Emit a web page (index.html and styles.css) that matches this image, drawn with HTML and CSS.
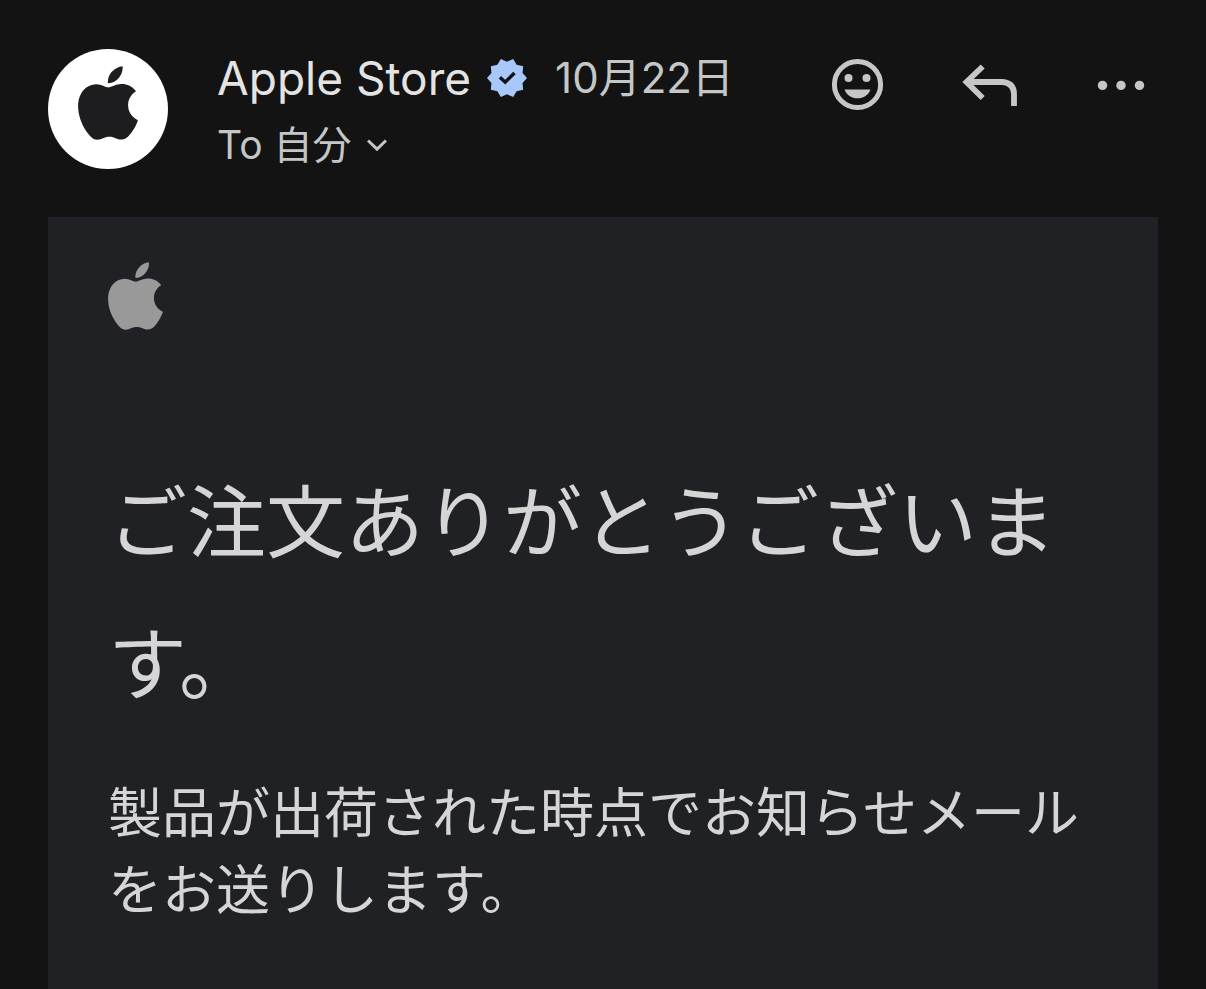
FILE: index.html
```html
<!DOCTYPE html>
<html lang="ja">
<head>
<meta charset="utf-8">
<meta name="viewport" content="width=device-width, initial-scale=1">
<title>Apple Store</title>
<link rel="stylesheet" href="styles.css">
</head>
<body>
<svg class="defs" aria-hidden="true">
  <symbol id="apple" viewBox="2.2 0 19.6 24">
    <path d="M12.152 6.896c-.948 0-2.415-1.078-3.96-1.04-2.04.027-3.91 1.183-4.961 3.014-2.117 3.675-.546 9.103 1.519 12.09 1.013 1.454 2.208 3.09 3.792 3.039 1.52-.065 2.09-.987 3.935-.987 1.831 0 2.35.987 3.96.948 1.637-.026 2.676-1.48 3.676-2.948 1.156-1.688 1.636-3.325 1.662-3.415-.039-.013-3.182-1.221-3.22-4.857-.026-3.04 2.48-4.494 2.597-4.559-1.429-2.09-3.623-2.324-4.39-2.376-2-.156-3.675 1.09-4.61 1.09zM15.53 3.83c.843-1.012 1.4-2.427 1.245-3.83-1.207.052-2.662.805-3.532 1.818-.78.896-1.454 2.338-1.273 3.714 1.338.104 2.715-.688 3.559-1.701"/>
  </symbol>
</svg>
<main class="message">
  <header class="header">
    <div class="avatar"><svg class="avatar-logo"><use href="#apple"/></svg></div>
    <div class="meta">
      <div class="sender-row">
        <span class="sender">Apple Store</span>
        <svg class="badge" viewBox="1 1 22 22" role="img" aria-label="認証済み">
          <path d="M23 12l-2.440-2.780.340-3.680-3.610-.820-1.890-3.180L12 3 8.600 1.540 6.710 4.720l-3.610.810.340 3.680L1 12l2.440 2.780-.340 3.690 3.610.820 1.890 3.180L12 21l3.400 1.460 1.890-3.180 3.610-.820-.340-3.680L23 12z" fill="#a8c7fa"/>
          <path d="M8.100 11.600 11 14.300 16.100 9.200" fill="none" stroke="#131314" stroke-width="1.900"/>
        </svg>
        <time class="date">10月22日</time>
      </div>
      <button class="recipient" type="button">To 自分
        <svg class="chevron" viewBox="0 0 20 12" aria-hidden="true"><path d="M1 1.500 10 10.200 19 1.500"/></svg>
      </button>
    </div>
    <div class="actions">
      <button class="action" type="button" aria-label="リアクション">
        <svg viewBox="0 0 56 56"><circle cx="28.500" cy="27.500" r="23.100" fill="none" stroke="currentColor" stroke-width="5"/><circle cx="19.500" cy="21" r="4"/><circle cx="37.500" cy="21" r="4"/><path d="M15.500 32.500h26C39.500 38 34.500 41.300 28.500 41.300S17.500 38 15.500 32.500z"/></svg>
      </button>
      <button class="action" type="button" aria-label="返信">
        <svg viewBox="0 0 56 56"><path d="M21.700 9.500 5.500 25l16.200 16M6 25h35.500Q53 26 53 37v12" fill="none" stroke="currentColor" stroke-width="5.800"/></svg>
      </button>
      <button class="action" type="button" aria-label="その他">
        <svg viewBox="0 0 56 56"><circle cx="9.500" cy="28.400" r="4.700"/><circle cx="28" cy="28.400" r="4.700"/><circle cx="46.500" cy="28.400" r="4.700"/></svg>
      </button>
    </div>
  </header>
  <article class="card">
    <svg class="card-logo" role="img" aria-label="Apple"><use href="#apple"/></svg>
    <h1 class="title">ご注文ありがとうございます。</h1>
    <p class="text">製品が出荷された時点でお知らせメールをお送りします。</p>
  </article>
</main>
</body>
</html>
```
FILE: styles.css
```css
* {
  box-sizing: border-box;
}

body {
  margin: 0;
  background: #131314;
  color: #e3e3e3;
  font-family: Inter, "Noto Sans CJK JP", sans-serif;
}

.defs {
  display: none;
}

.message {
  display: flex;
  flex-direction: column;
  min-height: 100vh;
  padding: 49px 48px 0;
}

.header {
  display: flex;
  align-items: flex-start;
  margin-bottom: 48px;
}

.avatar {
  display: flex;
  flex: none;
  align-items: center;
  justify-content: center;
  width: 120px;
  height: 120px;
  padding-bottom: 13px;
  border-radius: 50%;
  background: #fff;
}

.avatar-logo {
  width: 60px;
  height: 74px;
  fill: #1d1d1f;
}

.meta {
  flex: 1;
  margin-left: 49px;
}

.sender-row {
  display: flex;
  align-items: center;
  height: 58px;
  white-space: nowrap;
}

.sender {
  font-size: 46px;
}

.badge {
  width: 40px;
  height: 40px;
  margin: 0 28px 0 16px;
}

.date {
  color: #c4c7c5;
  font-size: 42px;
  line-height: 50px;
}

.recipient {
  display: flex;
  align-items: center;
  gap: 16px;
  height: 48px;
  margin-top: 14px;
  padding: 0;
  border: 0;
  background: none;
  color: #c4c7c5;
  font: inherit;
  font-size: 39px;
  line-height: 48px;
}

.chevron {
  width: 20px;
  height: 12px;
  fill: none;
  stroke: currentColor;
  stroke-width: 3;
}

.actions {
  display: flex;
  gap: 76px;
  padding: 8px 9px 0 0;
}

.action {
  width: 56px;
  height: 56px;
  padding: 0;
  border: 0;
  background: none;
  color: #c4c7c5;
}

.action svg {
  display: block;
  fill: currentColor;
}

.card {
  flex: 1;
  padding: 45px 60px 60px;
  background: #202124;
  color: #d5d5d5;
}

.card-logo {
  display: block;
  width: 55px;
  height: 68px;
  fill: #999;
}

.title {
  margin: 122px 0 39px;
  font-size: 79px;
  font-weight: 400;
  line-height: 142px;
}

.text {
  margin: 0;
  font-size: 54px;
  line-height: 77px;
}
```
